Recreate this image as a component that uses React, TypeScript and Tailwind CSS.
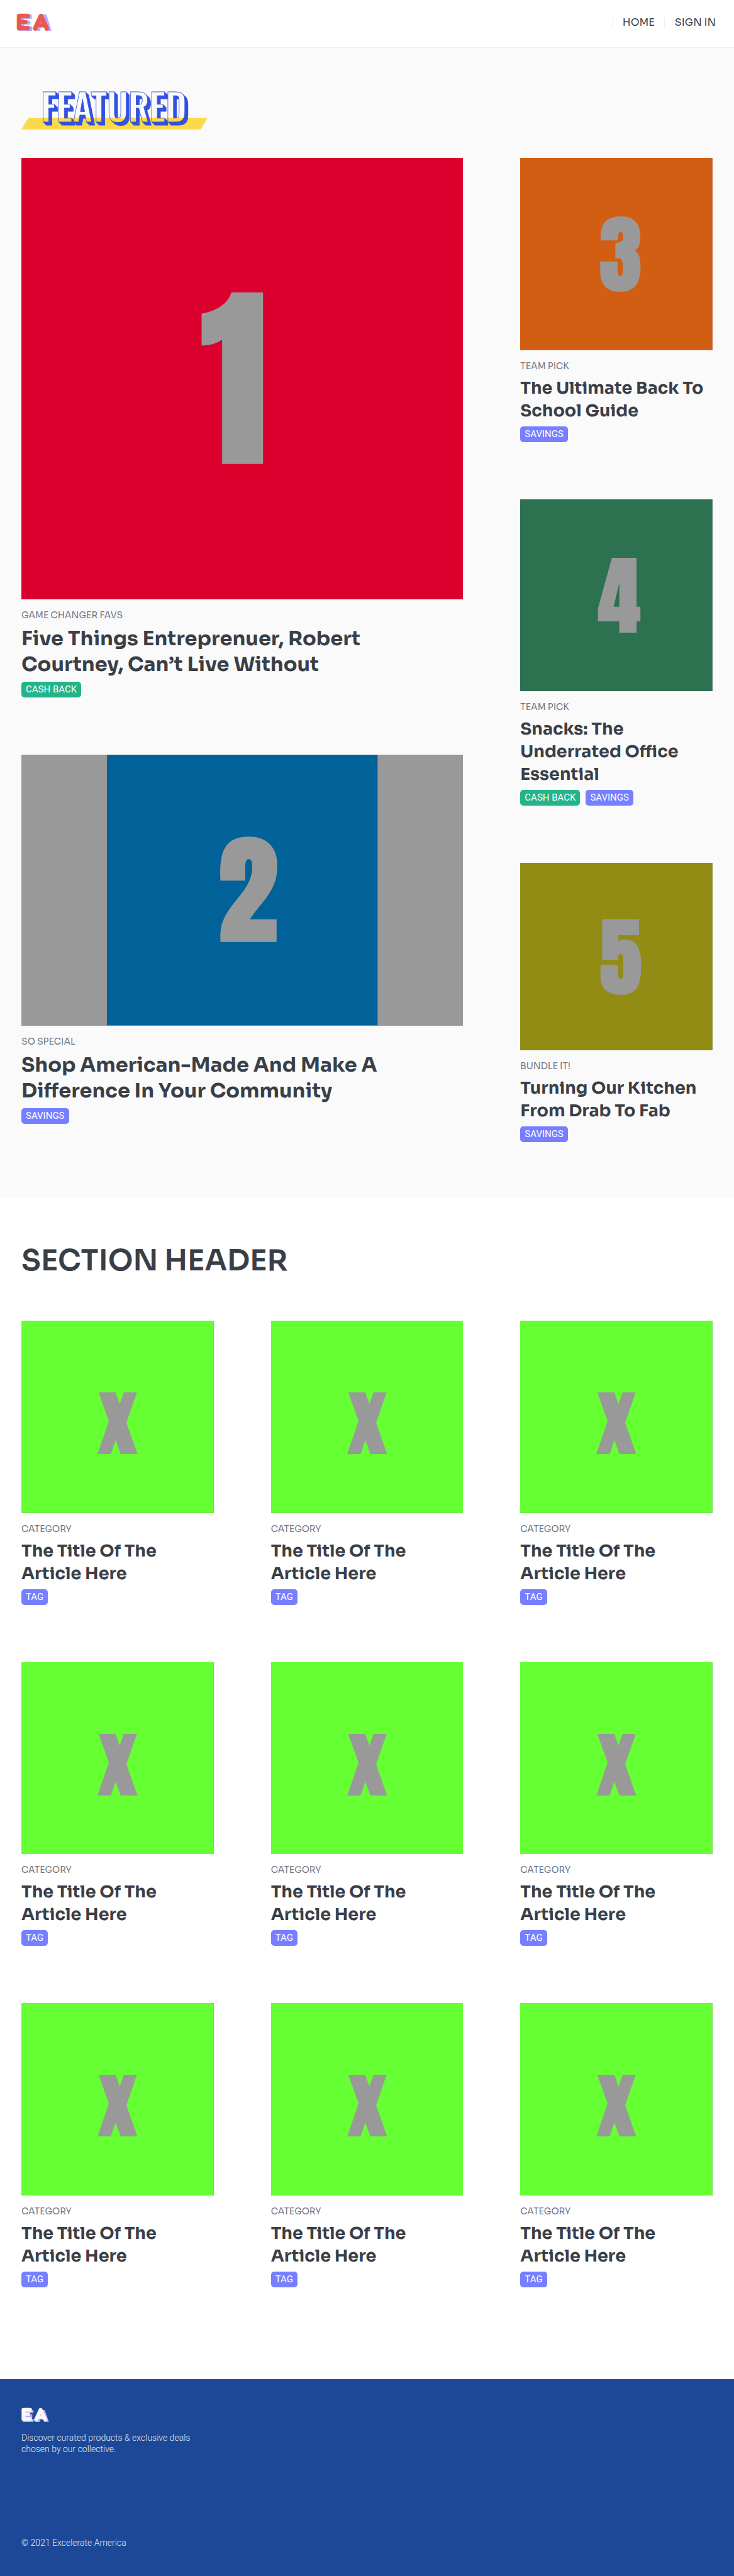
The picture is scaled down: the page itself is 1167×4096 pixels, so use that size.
import { useId } from "react";

type Tone = "cash" | "savings";

interface Tag {
  label: string;
  tone: Tone;
}

interface Picture {
  glyph: string;
  color: string;
  cx: number;
  size: number;
}

interface Article {
  category: string;
  title: string;
  tags: Tag[];
  picture: Picture;
  aspect?: string;
  large?: boolean;
}

const CASH: Tag = { label: "CASH BACK", tone: "cash" };
const SAVINGS: Tag = { label: "SAVINGS", tone: "savings" };

const mainArticles: Article[] = [
  {
    category: "GAME CHANGER FAVS",
    title: "Five Things Entreprenuer, Robert Courtney, Can’t Live Without",
    tags: [CASH],
    picture: { glyph: "1", color: "#dc002f", cx: 258, size: 234 },
    large: true,
  },
  {
    category: "SO SPECIAL",
    title: "Shop American-Made And Make A Difference In Your Community",
    tags: [SAVINGS],
    picture: { glyph: "2", color: "#006298", cx: 279, size: 234 },
    aspect: "aspect-[1232/755]",
    large: true,
  },
];

const sideArticles: Article[] = [
  {
    category: "TEAM PICK",
    title: "The Ultimate Back To School Guide",
    tags: [SAVINGS],
    picture: { glyph: "3", color: "#d25e14", cx: 280, size: 234 },
  },
  {
    category: "TEAM PICK",
    title: "Snacks: The Underrated Office Essential",
    tags: [CASH, SAVINGS],
    picture: { glyph: "4", color: "#2c7150", cx: 276, size: 234 },
  },
  {
    category: "BUNDLE IT!",
    title: "Turning Our Kitchen From Drab To Fab",
    tags: [SAVINGS],
    picture: { glyph: "5", color: "#928c14", cx: 280, size: 234 },
    aspect: "aspect-[536/522]",
  },
];

const gridArticles: Article[] = Array.from({ length: 9 }, () => ({
  category: "CATEGORY",
  title: "The Title Of The Article Here",
  tags: [{ label: "TAG", tone: "savings" }],
  picture: { glyph: "x", color: "#66ff33", cx: 268, size: 224 },
}));

function Logo({ color, className }: { color: string; className: string }) {
  return (
    <svg viewBox="0 0 98 49" className={`overflow-visible ${className}`} role="img" aria-label="EA">
      <g fill="#aeaeff" fontFamily="'Work Sans', Inter, sans-serif" fontWeight="900" fontSize="67">
        <text x="1" y="48">E</text>
        <text x="49" y="48">A</text>
      </g>
      <g
        fill={color}
        stroke={color}
        strokeWidth="1"
        fontFamily="Fredoka, Inter, sans-serif"
        fontWeight="700"
        fontSize="64"
      >
        <text x="-2" y="45">E</text>
        <text x="44" y="45">A</text>
      </g>
    </svg>
  );
}

function FeaturedBanner() {
  const id = useId();
  const face = `${id}face`;
  const word = `${id}word`;
  return (
    <svg viewBox="0 0 296 63" className="h-[63px] w-[296px] overflow-visible" role="img" aria-label="Featured">
      <defs>
        <linearGradient id={face} gradientUnits="userSpaceOnUse" x1="0" y1="0" x2="0" y2="63">
          <stop offset="0.706" stopColor="#fafafa" />
          <stop offset="0.706" stopColor="#fad94a" />
        </linearGradient>
      </defs>
      <path d="M11 44.5H296L285 62.7H0Z" fill="#fad94a" />
      {[5, 4, 3, 2, 1].map((d) => (
        <use key={d} href={`#${word}`} x={d} y={d} fill="#3452e1" />
      ))}
      <g fill={`url(#${face})`}>
        <text
          id={word}
          x="31"
          y="51"
          fontFamily="Oswald, 'Roboto Condensed', sans-serif"
          fontWeight="500"
          fontSize="60"
          stroke="#3452e1"
          strokeWidth="0.8"
          fill="inherit"
        >
          FEATURED
        </text>
      </g>
    </svg>
  );
}

function PlaceholderPicture({ picture, fit }: { picture: Picture; fit: "meet" | "slice" }) {
  return (
    <svg viewBox="0 0 536 536" className="block h-full w-full" preserveAspectRatio={`xMidYMid ${fit}`}>
      <rect width="536" height="536" fill={picture.color} />
      <text
        x={picture.cx}
        y="368"
        textAnchor="middle"
        fontFamily="Anton, 'Roboto Condensed', sans-serif"
        fontSize={picture.size}
        fill="#999999"
        stroke="#999999"
        strokeWidth="7"
      >
        {picture.glyph}
      </text>
    </svg>
  );
}

const toneClass: Record<Tone, string> = {
  cash: "bg-[#24b48a]",
  savings: "bg-[#757fff]",
};

function ArticleCard({ article }: { article: Article }) {
  return (
    <article>
      <div className={`w-full bg-[#999999] ${article.aspect ?? "aspect-square"}`}>
        <PlaceholderPicture picture={article.picture} fit={article.large ? "meet" : "slice"} />
      </div>
      <p className="mt-[15px] text-sm text-[#6f7685]">{article.category}</p>
      <h3
        className={
          article.large
            ? "mt-[7px] text-[32px] leading-[41px] font-bold"
            : "mt-[7px] text-[27px] leading-[36px] font-bold"
        }
      >
        <a href="#">{article.title}</a>
      </h3>
      <ul className="mt-[7px] flex gap-[9px] font-['Roboto',sans-serif]">
        {article.tags.map((tag) => (
          <li
            key={tag.label}
            className={`rounded-[5px] px-[7px] text-[15px] leading-[25px] text-white ${toneClass[tag.tone]}`}
          >
            {tag.label}
          </li>
        ))}
      </ul>
    </article>
  );
}

export default function App() {
  return (
    <div className="min-h-screen bg-white font-['Sora','Inter',sans-serif] text-[#3a3f47]">
      <header className="flex h-[76px] items-center justify-between border-b border-[#edf1f5] pr-[29px] pl-[27px]">
        <a href="#" className="-mt-1">
          <Logo color="#ed574d" className="h-7 w-14" />
        </a>
        <nav className="-mt-1 flex gap-[15px] leading-4">
          <a href="#" className="border-l border-[#edf1f5] pl-4">HOME</a>
          <a href="#" className="border-l border-[#edf1f5] pl-4">SIGN IN</a>
        </nav>
      </header>

      <main>
        <section className="bg-[#fafafa] px-[34px] pt-[67px] pb-[88px]">
          <h2>
            <FeaturedBanner />
          </h2>
          <div className="mt-[45px] grid grid-cols-3 gap-x-[91px]">
            <div className="col-span-2 flex flex-col gap-[91px]">
              {mainArticles.map((a) => (
                <ArticleCard key={a.title} article={a} />
              ))}
            </div>
            <div className="flex flex-col gap-[91px]">
              {sideArticles.map((a) => (
                <ArticleCard key={a.title} article={a} />
              ))}
            </div>
          </div>
        </section>

        <section className="px-[34px] pt-[72px] pb-[146px]">
          <h2 className="text-[46px] leading-[56px] font-semibold">SECTION HEADER</h2>
          <div className="mt-[68px] grid grid-cols-3 gap-[91px]">
            {gridArticles.map((a, i) => (
              <ArticleCard key={i} article={a} />
            ))}
          </div>
        </section>
      </main>

      <footer className="bg-[#1c4897] px-[34px] pt-[46px] pb-[46px] font-['Roboto',sans-serif] text-sm leading-[18px] font-light text-[#e2e8f0]">
        <Logo color="#fafafa" className="h-[22px] w-[45px]" />
        <p className="mt-4 max-w-[280px]">Discover curated products &amp; exclusive deals chosen by our collective.</p>
        <p className="mt-[131px]">© 2021 Excelerate America</p>
      </footer>
    </div>
  );
}
